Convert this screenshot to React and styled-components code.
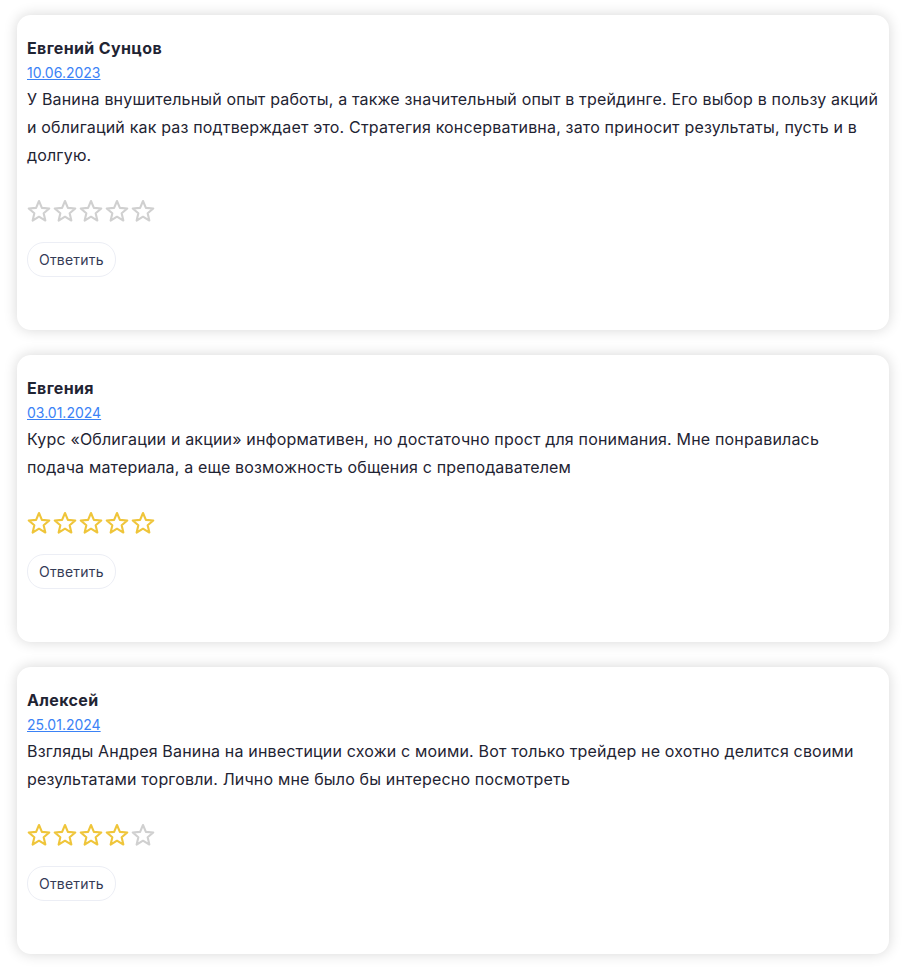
import React from 'react';
import styled, { createGlobalStyle } from 'styled-components';

const reviews = [
  {
    name: 'Евгений Сунцов',
    date: '10.06.2023',
    text: 'У Ванина внушительный опыт работы, а также значительный опыт в трейдинге. Его выбор в пользу акций и облигаций как раз подтверждает это. Стратегия консервативна, зато приносит результаты, пусть и в долгую.',
    rating: 0,
  },
  {
    name: 'Евгения',
    date: '03.01.2024',
    text: 'Курс «Облигации и акции» информативен, но достаточно прост для понимания. Мне понравилась подача материала, а еще возможность общения с преподавателем',
    rating: 5,
  },
  {
    name: 'Алексей',
    date: '25.01.2024',
    text: 'Взгляды Андрея Ванина на инвестиции схожи с моими. Вот только трейдер не охотно делится своими результатами торговли. Лично мне было бы интересно посмотреть',
    rating: 4,
  },
];

const Star = ({ filled }) => (
  <StarSvg viewBox="0 0 24 24" $filled={filled}>
    <path d="M12 2L14.88 8.84 22.27 9.46 16.66 14.31 18.35 21.54 12 17.7 5.65 21.54 7.34 14.31 1.73 9.46 9.12 8.84Z" />
  </StarSvg>
);

const App = () => {
  return (
    <>
      <GlobalStyle />
      <List>
        {reviews.map((r) => (
          <Card key={r.name}>
            <Name>{r.name}</Name>
            <DateLink href="#">{r.date}</DateLink>
            <Text>{r.text}</Text>
            <Stars>
              {[1, 2, 3, 4, 5].map((i) => (
                <Star key={i} filled={i <= r.rating} />
              ))}
            </Stars>
            <ReplyButton>Ответить</ReplyButton>
          </Card>
        ))}
      </List>
    </>
  );
};

const GlobalStyle = createGlobalStyle`
  body {
    margin: 0;
    background: #fff;
    font-family: Inter, "Noto Sans", sans-serif;
  }
`;

const List = styled.div`
  display: flex;
  flex-direction: column;
  gap: 25px;
  padding: 15px 17px;
`;

const Card = styled.div`
  display: flex;
  flex-direction: column;
  align-items: flex-start;
  background: #fff;
  border-radius: 14px;
  box-shadow: 0 0 14px rgba(0, 0, 0, 0.16);
  padding: 21px 10px 53px;
`;

const Name = styled.div`
  font-size: 16px;
  font-weight: 700;
  line-height: 24px;
  letter-spacing: 0.35px;
  color: #1f2433;
`;

const DateLink = styled.a`
  font-size: 14px;
  line-height: 25px;
  color: #3b82f6;
  text-decoration: underline;
`;

const Text = styled.p`
  margin: 0;
  font-size: 16px;
  line-height: 28px;
  letter-spacing: 0.17px;
  color: #1f2433;
`;

const Stars = styled.div`
  display: flex;
  gap: 2px;
  margin-top: 30px;
`;

const StarSvg = styled.svg`
  width: 24px;
  height: 24px;
  path {
    fill: none;
    stroke: ${(p) => (p.$filled ? '#efc53a' : '#d0d0d0')};
    stroke-width: 2.1;
    stroke-linejoin: round;
  }
`;

const ReplyButton = styled.button`
  margin-top: 19px;
  height: 35px;
  padding: 0 11px;
  border: 1px solid #eceef5;
  border-radius: 17px;
  background: #fff;
  font-family: Inter, "Noto Sans", sans-serif;
  font-size: 14px;
  letter-spacing: 0.2px;
  color: #353b56;
  cursor: pointer;
`;

export default App;
